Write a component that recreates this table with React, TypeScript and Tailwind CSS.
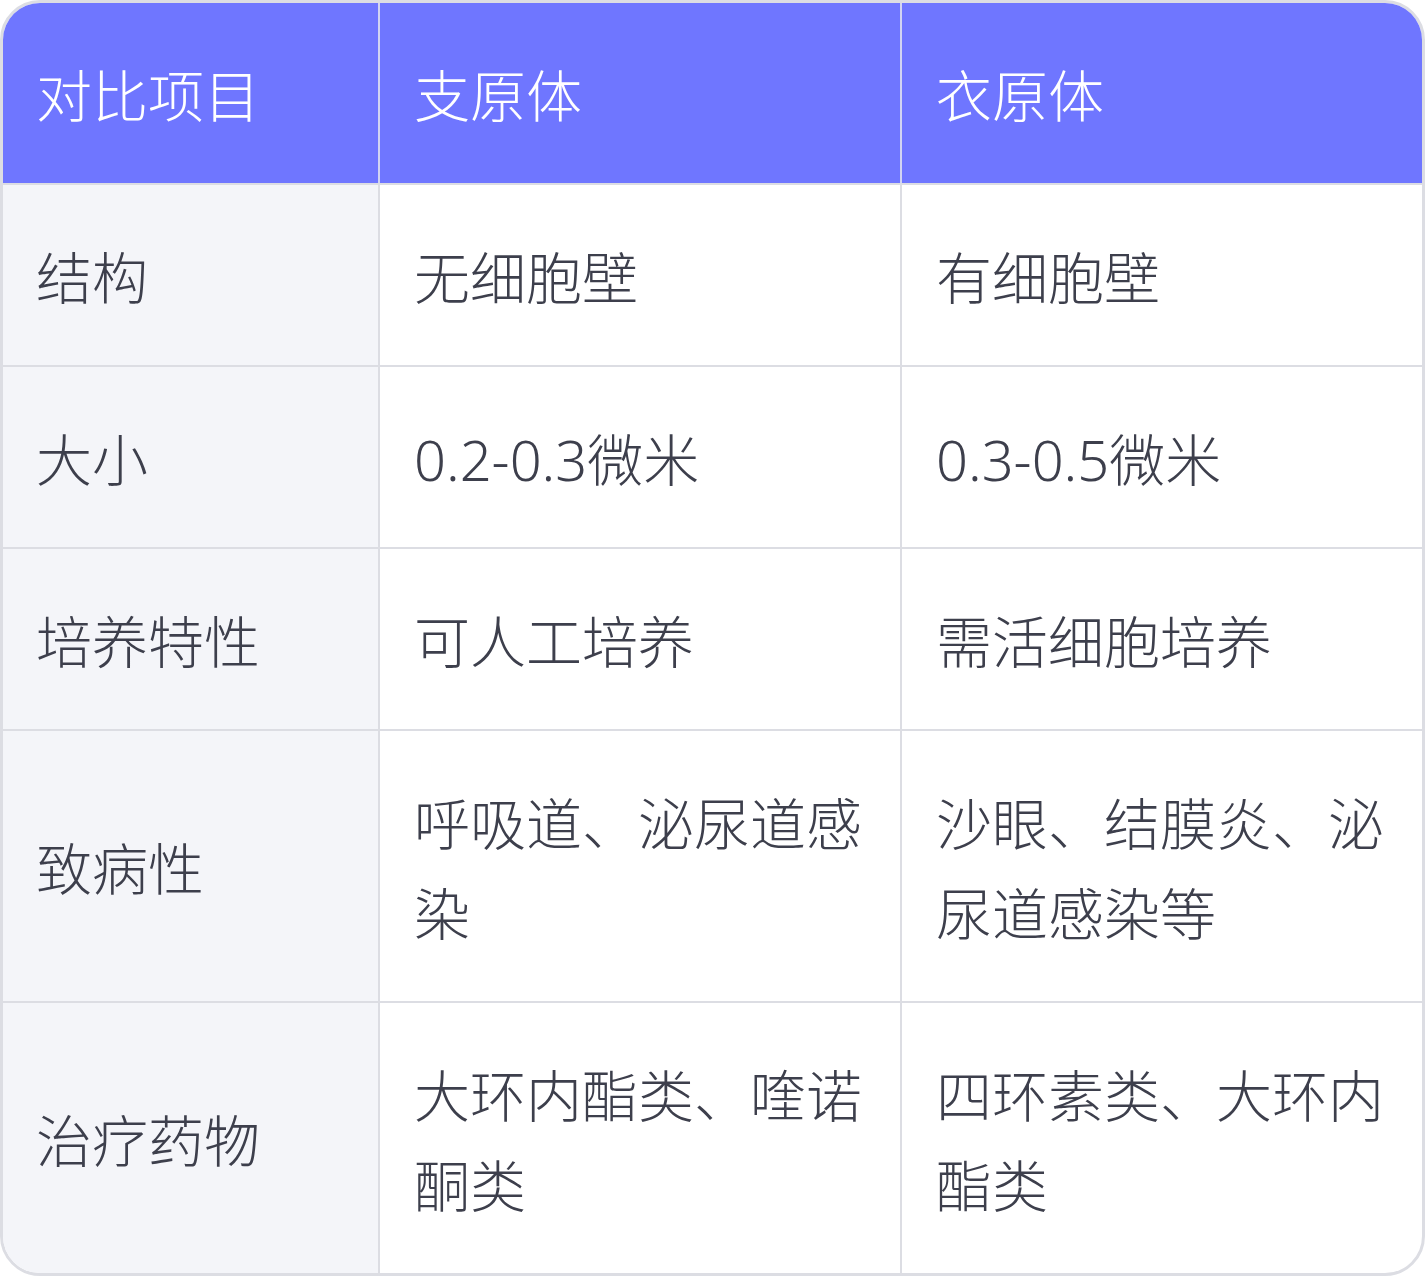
import React from 'react';

const rows: [string, string, string][] = [
  ['结构', '无细胞壁', '有细胞壁'],
  ['大小', '0.2-0.3微米', '0.3-0.5微米'],
  ['培养特性', '可人工培养', '需活细胞培养'],
  ['致病性', '呼吸道、泌尿道感染', '沙眼、结膜炎、泌尿道感染等'],
  ['治疗药物', '大环内酯类、喹诺酮类', '四环素类、大环内酯类'],
];

export default function App() {
  return (
    <div className="w-[1425px] h-[1276px] bg-white">
      <div
        className="w-[1425px] h-[1276px] border-[3px] border-[#dcdde3] rounded-[40px] overflow-hidden text-[56px] leading-[90px] font-light"
        style={{ fontFamily: '"Noto Sans", "Noto Sans CJK SC", sans-serif' }}
      >
        {/* Header */}
        <div className="grid grid-cols-[377px_522px_520px] bg-[#6f76ff] text-white border-b-2 border-[#dcdde3]">
          <div className="pl-[33px] pr-[36px] pt-[47px] pb-[43px] border-r-2 border-[#d2d4f2]">对比项目</div>
          <div className="pl-[34px] pr-[36px] pt-[47px] pb-[43px] border-r-2 border-[#d2d4f2]">支原体</div>
          <div className="pl-[34px] pr-[36px] pt-[47px] pb-[43px]">衣原体</div>
        </div>
        {rows.map((r, i) => (
          <div
            key={i}
            className={
              'grid grid-cols-[377px_522px_520px] text-[#3d3f4c] ' +
              (i < rows.length - 1 ? 'border-b-2 border-[#dcdde3]' : '')
            }
          >
            <div className="flex items-center pl-[33px] pr-[36px] pt-[47px] pb-[43px] bg-[#f4f5f9] border-r-2 border-[#dcdde3]">
              {r[0]}
            </div>
            <div className="pl-[34px] pr-[36px] pt-[47px] pb-[43px] border-r-2 border-[#dcdde3]">{r[1]}</div>
            <div className="pl-[34px] pr-[36px] pt-[47px] pb-[43px]">{r[2]}</div>
          </div>
        ))}
      </div>
    </div>
  );
}
